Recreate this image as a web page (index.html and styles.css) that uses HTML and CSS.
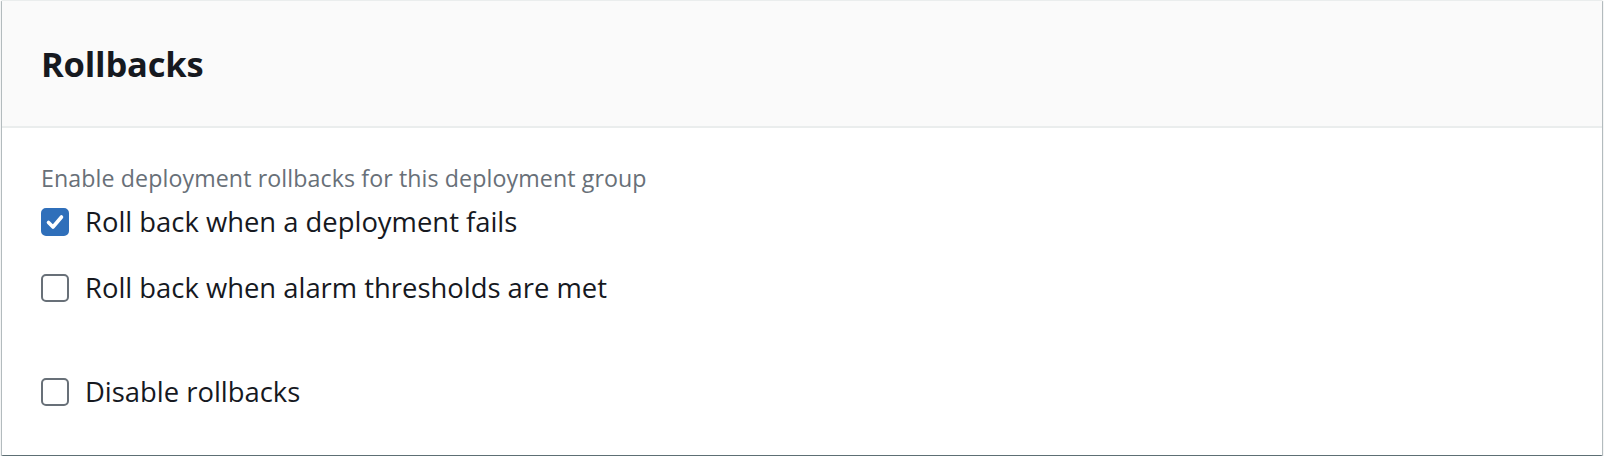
FILE: index.html
```html
<!DOCTYPE html>
<html>
<head>
<meta charset="utf-8">
<link rel="stylesheet" href="styles.css">
</head>
<body>
<div class="panel">
  <div class="panel-header">
    <h2 class="title">Rollbacks</h2>
  </div>
  <div class="panel-body">
    <div class="desc">Enable deployment rollbacks for this deployment group</div>
    <div class="group">
      <label class="option">
        <span class="box checked">
          <svg viewBox="0 0 28 28" width="28" height="28"><path d="M7.5 14.5 L12 19 L20.5 9" fill="none" stroke="#fff" stroke-width="3.6" stroke-linecap="round" stroke-linejoin="round"/></svg>
        </span>
        <span class="label">Roll back when a deployment fails</span>
      </label>
      <label class="option">
        <span class="box"></span>
        <span class="label">Roll back when alarm thresholds are met</span>
      </label>
    </div>
    <label class="option standalone">
      <span class="box"></span>
      <span class="label">Disable rollbacks</span>
    </label>
  </div>
</div>
</body>
</html>
```

FILE: styles.css
```css
html, body {
  margin: 0;
  padding: 0;
  background: #ffffff;
}
body {
  font-family: "Open Sans", "Noto Sans", "Liberation Sans", sans-serif;
  color: #16191f;
  padding: 0 2px 3px 2px;
}
.panel {
  background: #ffffff;
  border-top: 1px solid #eaeded;
  box-shadow: 0 2px 1px 0 rgba(0, 28, 36, 0.35), 1px 1px 1px 0 rgba(0, 28, 36, 0.25), -1px 1px 1px 0 rgba(0, 28, 36, 0.25);
}
.panel-header {
  background: #fafafa;
  border-bottom: 2px solid #eaeded;
  height: 127px;
  display: flex;
  align-items: center;
  padding: 0 39px;
  box-sizing: border-box;
}
.title {
  margin: 0;
  font-size: 34.5px;
  font-weight: 700;
  line-height: 1;
  letter-spacing: -0.2px;
  padding-top: 2px;
}
.panel-body {
  padding: 35px 39px 46px;
  display: flex;
  flex-direction: column;
}
.desc {
  font-size: 23.2px;
  line-height: 30px;
  color: #687078;
  letter-spacing: 0.1px;
}
.group {
  display: flex;
  flex-direction: column;
  gap: 31px;
  margin-top: 11px;
}
.option {
  display: flex;
  align-items: center;
  gap: 16px;
  height: 35px;
}
.standalone {
  margin-top: 69px;
}
.box {
  width: 28px;
  height: 28px;
  box-sizing: border-box;
  border: 2px solid #687078;
  border-radius: 5px;
  background: #fff;
  flex: none;
  display: flex;
}
.box.checked {
  background: #2f6fba;
  border-color: #2f6fba;
}
.box.checked svg {
  margin: -2px;
}
.label {
  font-size: 27.4px;
  line-height: 35px;
  color: #16191f;
}
```
